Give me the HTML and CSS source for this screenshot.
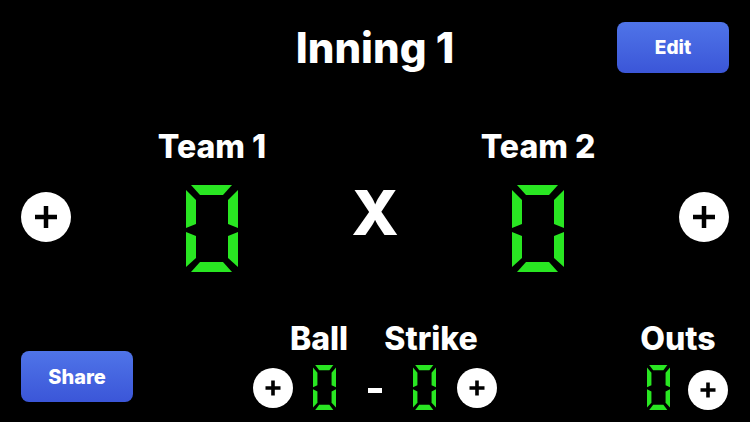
FILE: index.html
```html
<!DOCTYPE html>
<html>
<head>
<meta charset="utf-8">
<link rel="stylesheet" href="styles.css">
</head>
<body>
<svg class="defs" width="0" height="0" aria-hidden="true">
  <defs>
    <g id="seg-zero">
      <polygon points="5,0 46,0 37,10 14,10"/>
      <polygon points="52,5 42,15 42,39 52,43"/>
      <polygon points="52,47 42,51 42,73 52,82"/>
      <polygon points="14,77 37,77 46,87 5,87"/>
      <polygon points="0,47 10,51 10,73 0,82"/>
      <polygon points="0,5 10,15 10,39 0,43"/>
    </g>
  </defs>
</svg>
<div class="page">
  <header class="header">
    <div class="header-side"></div>
    <h1 class="title">Inning 1</h1>
    <div class="header-side header-right">
      <button class="btn">Edit</button>
    </div>
  </header>

  <section class="score">
    <div class="cell cell-left">
      <span class="plus plus-lg">
        <svg viewBox="0 0 50 50"><circle cx="25" cy="25" r="25"/><path d="M14 25H36M25 14V36"/></svg>
      </span>
    </div>
    <div class="team">
      <div class="team-name">Team 1</div>
      <svg class="digit digit-lg" viewBox="0 0 52 87"><use href="#seg-zero"/></svg>
    </div>
    <div class="cell cell-mid">
      <span class="versus">X</span>
    </div>
    <div class="team">
      <div class="team-name">Team 2</div>
      <svg class="digit digit-lg" viewBox="0 0 52 87"><use href="#seg-zero"/></svg>
    </div>
    <div class="cell cell-right">
      <span class="plus plus-lg">
        <svg viewBox="0 0 50 50"><circle cx="25" cy="25" r="25"/><path d="M14 25H36M25 14V36"/></svg>
      </span>
    </div>
  </section>

  <section class="bottom">
    <button class="btn btn-share">Share</button>

    <div class="count">
      <div class="count-labels">
        <span class="label label-ball">Ball</span>
        <span class="label label-strike">Strike</span>
      </div>
      <div class="count-row">
        <span class="plus plus-sm">
          <svg viewBox="0 0 40 40"><circle cx="20" cy="20" r="20"/><path d="M12.5 20H27.5M20 12.5V27.5"/></svg>
        </span>
        <svg class="digit digit-sm d-ball" viewBox="0 0 52 87" preserveAspectRatio="none"><use href="#seg-zero"/></svg>
        <span class="dash"></span>
        <svg class="digit digit-sm d-strike" viewBox="0 0 52 87" preserveAspectRatio="none"><use href="#seg-zero"/></svg>
        <span class="plus plus-sm p-strike">
          <svg viewBox="0 0 40 40"><circle cx="20" cy="20" r="20"/><path d="M12.5 20H27.5M20 12.5V27.5"/></svg>
        </span>
      </div>
    </div>

    <div class="outs">
      <span class="label label-outs">Outs</span>
      <div class="outs-row">
        <svg class="digit digit-sm" viewBox="0 0 52 87" preserveAspectRatio="none"><use href="#seg-zero"/></svg>
        <span class="plus plus-sm p-outs">
          <svg viewBox="0 0 40 40"><circle cx="20" cy="20" r="20"/><path d="M12.5 20H27.5M20 12.5V27.5"/></svg>
        </span>
      </div>
    </div>
  </section>
</div>
</body>
</html>
```

FILE: styles.css
```css
* { box-sizing: border-box; }

html, body {
  margin: 0;
  padding: 0;
  background: #000;
}

body {
  font-family: Inter, "Noto Sans", "Liberation Sans", sans-serif;
  color: #fff;
}

.defs { position: absolute; width: 0; height: 0; overflow: hidden; }

.page {
  width: 750px;
  height: 422px;
  overflow: hidden;
  display: flex;
  flex-direction: column;
}

/* Header */
.header {
  display: grid;
  grid-template-columns: 1fr auto 1fr;
  align-items: center;
  padding: 21px 21px 0;
  height: 72px;
}

.title {
  margin: 1px 0 0;
  font-size: 42px;
  line-height: 51px;
  font-weight: 800;
}

.header-right {
  display: flex;
  justify-content: flex-end;
}

.btn {
  width: 112px;
  height: 51px;
  border: none;
  border-radius: 8px;
  background: linear-gradient(to bottom, #4f74e8, #3b56d8);
  color: #fff;
  font-family: Inter, "Noto Sans", "Liberation Sans", sans-serif;
  font-size: 19px;
  font-weight: 800;
  padding: 0;
  cursor: pointer;
}

/* Score */
.score {
  display: grid;
  grid-template-columns: 121px 182px 144px 182px 121px;
  margin-top: 55px;
}

.cell { display: flex; }
.cell-left { justify-content: flex-start; padding-left: 21px; }
.cell-right { justify-content: flex-end; padding-right: 21px; }
.cell-mid { justify-content: center; }

.plus { display: block; }
.plus svg { display: block; width: 100%; height: 100%; }
.plus circle { fill: #fff; }
.plus path { stroke: #000; fill: none; }

.plus-lg {
  width: 50px;
  height: 50px;
  margin-top: 65px;
}
.plus-lg path { stroke-width: 4.5; }

.plus-sm {
  width: 40px;
  height: 40px;
}
.plus-sm path { stroke-width: 3.6; }

.versus {
  display: block;
  margin-top: 55px;
  font-size: 62px;
  line-height: 62px;
  font-weight: 800;
}

.team {
  display: flex;
  flex-direction: column;
  align-items: center;
}

.team-name {
  font-size: 32px;
  line-height: 40px;
  font-weight: 800;
}

.digit { display: block; fill: #29e622; }

.digit-lg {
  width: 52px;
  height: 87px;
  margin-top: 18px;
}

.digit-sm {
  width: 23px;
  height: 45px;
}

/* Bottom */
.bottom {
  display: flex;
  align-items: flex-start;
  padding: 0 21px;
  margin-top: 47px;
}

.btn-share {
  margin-top: 32px;
  font-size: 20px;
}

.label {
  display: block;
  font-size: 32px;
  line-height: 40px;
  font-weight: 800;
  text-align: center;
}

.count {
  margin-left: 120px;
  width: 244px;
}

.count-labels { display: flex; }
.label-ball { width: 80px; margin-left: 26px; }
.label-strike { width: 120px; margin-left: 12px; }

.count-row {
  display: flex;
  align-items: center;
  margin-top: 6px;
}

.d-ball { margin-left: 20px; }
.dash {
  display: block;
  width: 14px;
  height: 5px;
  background: #fff;
  margin-left: 32px;
  margin-top: 5px;
}
.d-strike { margin-left: 31px; }
.p-strike { margin-left: 21px; }

.outs {
  margin-left: 130px;
  width: 102px;
}

.outs-row {
  display: flex;
  align-items: center;
  padding-left: 20px;
  margin-top: 6px;
}

.p-outs { margin-left: 18px; margin-top: 4px; }
```
